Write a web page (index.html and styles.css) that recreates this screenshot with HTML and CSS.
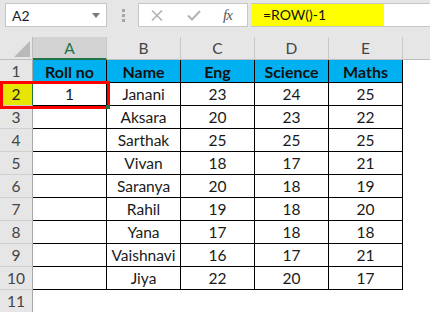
FILE: index.html
```html
<!DOCTYPE html>
<html lang="en">

<head>
    <meta charset="UTF-8">
    <meta name="viewport" content="width=device-width, initial-scale=1.0">
    <title>ROW()-1</title>
    <link rel="stylesheet" href="styles.css">
</head>

<body>
    <div class="topbar">
        <div class="namebox">
            <span>A2</span>
            <svg class="arrow" width="8" height="5" viewBox="0 0 8 5"><path d="M0 0H8L4 5Z" fill="#7a7a7a" /></svg>
        </div>
        <div class="dots">
            <svg width="3" height="13" viewBox="0 0 3 13">
                <rect x="0" y="0" width="3" height="3" fill="#a6a6a6" />
                <rect x="0" y="5" width="3" height="3" fill="#a6a6a6" />
                <rect x="0" y="10" width="3" height="3" fill="#a6a6a6" />
            </svg>
        </div>
        <div class="fxbox">
            <svg class="cross" width="12" height="11" viewBox="0 0 12 11"><path d="M1 0.5L11 10.5M11 0.5L1 10.5" stroke="#b3b3b3" stroke-width="1.6" /></svg>
            <svg class="check" width="14" height="11" viewBox="0 0 14 11"><path d="M1 5.5L5 9.5L13 1" stroke="#b3b3b3" stroke-width="2" fill="none" /></svg>
            <span class="fx">fx</span>
        </div>
        <div class="formula">
            <span class="hilite">=ROW()-1</span>
        </div>
    </div>

    <div class="sheet">
        <div class="corner">
            <svg width="16" height="16" viewBox="0 0 16 16"><path d="M16 0V16H0Z" fill="#b9b9b9" /></svg>
        </div>
        <div class="colhead active">A</div>
        <div class="colhead">B</div>
        <div class="colhead">C</div>
        <div class="colhead">D</div>
        <div class="colhead">E</div>
        <div class="colhead last"></div>

        <div class="rowhead">1</div>
        <div class="cell head">Roll no</div>
        <div class="cell head">Name</div>
        <div class="cell head">Eng</div>
        <div class="cell head">Science</div>
        <div class="cell head">Maths</div>
        <div class="empty"></div>

        <div class="rowhead current">2</div>
        <div class="cell">1</div>
        <div class="cell">Janani</div>
        <div class="cell">23</div>
        <div class="cell">24</div>
        <div class="cell">25</div>
        <div class="empty"></div>

        <div class="rowhead">3</div>
        <div class="cell"></div>
        <div class="cell">Aksara</div>
        <div class="cell">20</div>
        <div class="cell">23</div>
        <div class="cell">22</div>
        <div class="empty"></div>

        <div class="rowhead">4</div>
        <div class="cell"></div>
        <div class="cell">Sarthak</div>
        <div class="cell">25</div>
        <div class="cell">25</div>
        <div class="cell">25</div>
        <div class="empty"></div>

        <div class="rowhead">5</div>
        <div class="cell"></div>
        <div class="cell">Vivan</div>
        <div class="cell">18</div>
        <div class="cell">17</div>
        <div class="cell">21</div>
        <div class="empty"></div>

        <div class="rowhead">6</div>
        <div class="cell"></div>
        <div class="cell">Saranya</div>
        <div class="cell">20</div>
        <div class="cell">18</div>
        <div class="cell">19</div>
        <div class="empty"></div>

        <div class="rowhead">7</div>
        <div class="cell"></div>
        <div class="cell">Rahil</div>
        <div class="cell">19</div>
        <div class="cell">18</div>
        <div class="cell">20</div>
        <div class="empty"></div>

        <div class="rowhead">8</div>
        <div class="cell"></div>
        <div class="cell">Yana</div>
        <div class="cell">17</div>
        <div class="cell">18</div>
        <div class="cell">18</div>
        <div class="empty"></div>

        <div class="rowhead">9</div>
        <div class="cell"></div>
        <div class="cell">Vaishnavi</div>
        <div class="cell">16</div>
        <div class="cell">17</div>
        <div class="cell">21</div>
        <div class="empty"></div>

        <div class="rowhead">10</div>
        <div class="cell"></div>
        <div class="cell">Jiya</div>
        <div class="cell">22</div>
        <div class="cell">20</div>
        <div class="cell">17</div>
        <div class="empty"></div>

        <div class="rowhead">11</div>
        <div class="empty"></div>
        <div class="empty"></div>
        <div class="empty"></div>
        <div class="empty"></div>
        <div class="empty"></div>
        <div class="empty"></div>

        <!-- red mark round the selected cell -->
        <div class="redbox"></div>
        <div class="handle"></div>
    </div>
</body>

</html>
```

FILE: styles.css
```css
html,
body {
    margin: 0;
    width: 430px;
    height: 312px;
    overflow: hidden;
    background: #e6e6e6;
    font-family: Lato, "Liberation Sans", sans-serif;
}

.topbar {
    height: 37px;
    box-sizing: border-box;
    padding-top: 3px;
    display: flex;
    align-items: flex-start;
}

.namebox {
    margin-left: 5px;
    width: 102px;
    height: 24px;
    box-sizing: border-box;
    border: 1px solid #c6c6c6;
    background: #fff;
    display: flex;
    align-items: center;
    padding: 0 6px;
    font-size: 14px;
    color: #222;
}

.namebox .arrow {
    margin-left: auto;
    margin-top: 1px;
}

.dots {
    width: 31px;
    height: 24px;
    display: flex;
    justify-content: center;
    align-items: center;
    padding-left: 1px;
    box-sizing: border-box;
}

.fxbox {
    width: 110px;
    height: 24px;
    box-sizing: border-box;
    border: 1px solid #c6c6c6;
    background: #fff;
    display: flex;
    align-items: center;
}

.fxbox .cross {
    margin-left: 12px;
}

.fxbox .check {
    margin-left: 24px;
}

.fxbox .fx {
    margin-left: 22px;
    font-family: "Liberation Serif", serif;
    font-style: italic;
    font-size: 15px;
    color: #555;
    letter-spacing: -1px;
}

.formula {
    flex: 1;
    margin-left: 3px;
    height: 24px;
    box-sizing: border-box;
    border: 1px solid #c6c6c6;
    border-right: none;
    border-left: none;
    background: #fff;
    display: flex;
}

.formula .hilite {
    width: 133px;
    box-sizing: border-box;
    background: #ffff00;
    padding-left: 12px;
    font-size: 14px;
    line-height: 22px;
    color: #111;
}

.sheet {
    position: relative;
    display: grid;
    grid-template-columns: 33px repeat(5, 74px) 1fr;
    grid-auto-rows: 23px;
    font-size: 15.5px;
}

.corner {
    border-right: 1px solid #bdbdbd;
    border-bottom: 1px solid #bdbdbd;
    display: flex;
    justify-content: flex-end;
    align-items: flex-end;
    padding: 0 2px 2px 0;
}

.colhead {
    border-right: 1px solid #c8c8c8;
    border-bottom: 1px solid #bdbdbd;
    display: flex;
    justify-content: center;
    align-items: center;
    color: #444;
}

.colhead.active {
    background: #d2d2d2;
    color: #217346;
    border-bottom: 2px solid #217346;
}

.colhead.last {
    border-right: none;
}

.rowhead {
    border-right: 1px solid #a8a8a8;
    border-bottom: 1px solid #d0d0d0;
    display: flex;
    justify-content: center;
    align-items: center;
    color: #444;
}

.rowhead.current {
    background: #e6e600;
    color: #222;
    border-right-color: #217346;
}

.cell {
    background: #fff;
    border-right: 1px solid #000;
    border-bottom: 1px solid #000;
    display: flex;
    justify-content: center;
    align-items: center;
    color: #1a1a1a;
}

.cell.head {
    background: #00b0f0;
    font-weight: bold;
    font-size: 16px;
    color: #111;
}

.empty {
    background: #fff;
}

.redbox {
    position: absolute;
    left: 0;
    top: 44px;
    width: 110px;
    height: 28px;
    box-sizing: border-box;
    border: 3px solid #ff0000;
}

.handle {
    position: absolute;
    left: 106px;
    top: 68px;
    width: 4px;
    height: 4px;
    background: #217346;
}
```
